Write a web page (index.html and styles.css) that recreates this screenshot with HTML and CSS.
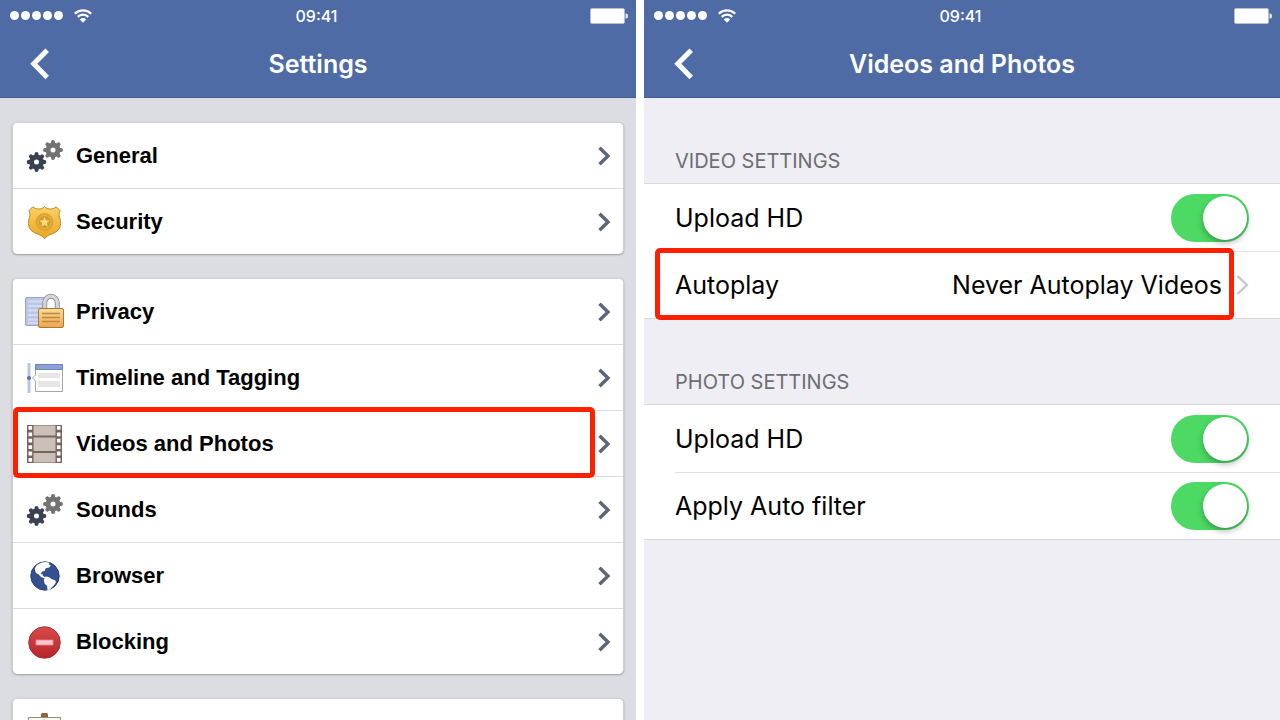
FILE: index.html
```html
<!DOCTYPE html>
<html lang="en">
<head>
	<meta charset="utf-8">
	<meta name="viewport" content="width=device-width, initial-scale=1">
	<title>Settings</title>
	<link rel="stylesheet" href="styles.css">
</head>
<body>
	<svg class="sprite" aria-hidden="true">
		<defs>
			<linearGradient id="gold" x1="0" y1="0" x2="0" y2="1">
				<stop offset="0" stop-color="#fbd263"/>
				<stop offset="1" stop-color="#eaa51f"/>
			</linearGradient>
			<linearGradient id="lock" x1="0" y1="0" x2="0" y2="1">
				<stop offset="0" stop-color="#fbdc9c"/>
				<stop offset="1" stop-color="#eda64a"/>
			</linearGradient>
			<linearGradient id="red" x1="0" y1="0" x2="0" y2="1">
				<stop offset="0" stop-color="#d94a4c"/>
				<stop offset="1" stop-color="#b5262b"/>
			</linearGradient>
		</defs>
		<symbol id="gear" viewBox="-10 -10 20 20">
			<g fill="none" stroke="currentColor">
				<circle r="5" stroke-width="5"/>
				<path stroke-width="4" stroke-linecap="round" d="M0-8V-6M0 8V6M-8 0H-6M8 0H6M-5.600-5.600l1.500 1.500M5.600 5.600L4.100 4.100M-5.600 5.600l1.500-1.500M5.600-5.600L4.100-4.100"/>
			</g>
		</symbol>
		<symbol id="gears" viewBox="0 0 40 40">
			<use href="#gear" x="19" y="4" width="20" height="20" color="#737373"/>
			<use href="#gear" x="2.500" y="16" width="20" height="20" color="#3a4152"/>
		</symbol>
		<symbol id="wifi" viewBox="0 0 18 14">
			<g fill="none" stroke="#fff" stroke-width="2.200">
				<path d="M.8 4.800a11.600 11.600 0 0 1 16.400 0"/>
				<path d="M3.700 7.900a7.500 7.500 0 0 1 10.600 0"/>
			</g>
			<path fill="#fff" d="M5.800 10.400a4.600 4.600 0 0 1 6.400 0L9 13.800z"/>
		</symbol>
		<symbol id="battery" viewBox="0 0 38 16">
			<rect x=".5" y=".5" width="34" height="15" rx="1.500" fill="#fff" stroke="#b4c1c9"/>
			<path fill="#e4e9ef" d="M35.500 5.500h1q1.500 0 1.500 2.500t-1.500 2.500h-1z"/>
		</symbol>
		<symbol id="back" viewBox="0 0 20 32">
			<path fill="none" stroke="#fff" stroke-width="5" d="M17.200 2.200L3.800 15.800l13.400 13.600"/>
		</symbol>
		<symbol id="chevron" viewBox="0 0 13 20">
			<path fill="none" stroke="currentColor" stroke-width="3.400" d="M1.500 1.700L10 10l-8.500 8.300"/>
		</symbol>
		<symbol id="chevron-thin" viewBox="0 0 13 20">
			<path fill="none" stroke="currentColor" stroke-width="2.400" d="M1.500 1L10.800 10l-9.300 9"/>
		</symbol>
	</svg>

	<div class="screens">
		<section class="screen screen-settings">
			<header class="top">
				<div class="status">
					<div class="signal">
						<i class="dot"></i><i class="dot"></i><i class="dot"></i><i class="dot"></i><i class="dot"></i>
						<svg class="wifi"><use href="#wifi"/></svg>
					</div>
					<span class="time">09:41</span>
					<svg class="battery"><use href="#battery"/></svg>
				</div>
				<div class="nav">
					<button class="back" type="button" aria-label="Back"><svg><use href="#back"/></svg></button>
					<h1>Settings</h1>
				</div>
			</header>
			<nav class="cards">
				<ul class="card">
					<li><a href="#general">
						<svg class="icon"><use href="#gears"/></svg>
						<span class="name">General</span>
						<svg class="chevron"><use href="#chevron"/></svg>
					</a></li>
					<li><a href="#security">
						<svg class="icon" viewBox="0 0 40 40">
							<path fill="url(#gold)" stroke="#b98a35" d="M20.500 4.500c1.500 1.800 3.500 2.500 6 2.500 2.300 0 4.200-.7 5.700-2.200l4 4c-1.200 2-1.500 4-.7 6.500.8 2.600 1 3.700 1 6.200 0 5.500-3.500 8.500-8.500 10.300-3.500 1.300-5.500 2.500-7.500 4.900-2-2.400-4-3.600-7.500-4.900-5-1.800-8.500-4.800-8.500-10.300 0-2.500.2-3.600 1-6.200.8-2.500.5-4.500-.7-6.500l4-4C10.300 6.300 12.200 7 14.500 7c2.500 0 4.500-.7 6-2.500z"/>
							<circle cx="20.500" cy="20" r="9" fill="#dda32d"/>
							<circle cx="20.500" cy="20" r="6.500" fill="#d0992f" stroke="#e7b64f"/>
							<path fill="#ffdc73" d="M20.500 14.800l1.500 3.500 3.700.3-2.800 2.500.9 3.700-3.300-2-3.300 2 .9-3.700-2.800-2.500 3.700-.3z"/>
						</svg>
						<span class="name">Security</span>
						<svg class="chevron"><use href="#chevron"/></svg>
					</a></li>
				</ul>
				<ul class="card">
					<li><a href="#privacy">
						<svg class="icon" viewBox="0 0 40 40">
							<rect x="1.500" y="5.500" width="20" height="28" rx="1.500" fill="#b9c6e6" stroke="#94a5d2"/>
							<path stroke="#d3dcf1" stroke-width="2" d="M4 9.500h16M4 14h16M4 18.500h16M4 23h16M4 27.500h16M4 31h16"/>
							<path fill="none" stroke="#8f8f92" stroke-width="5" d="M20.700 17v-6a6.300 6.800 0 0 1 12.600 0v6"/>
							<path fill="none" stroke="#d6d6d8" stroke-width="3.200" d="M20.700 17v-6a6.300 6.800 0 0 1 12.600 0v6"/>
							<rect x="14.500" y="16.500" width="25" height="19" rx="1.500" fill="url(#lock)" stroke="#a8763a"/>
							<path stroke="#bf873f" stroke-width="1.300" d="M18 21.500h18M18 25.500h18M18 29.500h18"/>
						</svg>
						<span class="name">Privacy</span>
						<svg class="chevron"><use href="#chevron"/></svg>
					</a></li>
					<li><a href="#timeline">
						<svg class="icon" viewBox="0 0 40 40">
							<path fill="#b8c5e4" d="M3.500 5h3v30h-3z"/>
							<circle cx="5" cy="20" r="2" fill="#5470ad"/>
							<path fill="#fff" stroke="#a6a6a6" d="M11.500 6.500h27v27h-27V23l-3-3 3-3z"/>
							<path fill="#8aa0d6" stroke="#6d84bd" d="M11.500 6.500h27v5h-27z"/>
							<path fill="#e6e6e6" d="M14 15h22v5H14zM14 23h22v6H14z"/>
						</svg>
						<span class="name">Timeline and Tagging</span>
						<svg class="chevron"><use href="#chevron"/></svg>
					</a></li>
					<li class="highlight"><a href="#videos">
						<svg class="icon" viewBox="0 0 40 40">
							<path fill="#75655f" d="M3 1h35v38H3z"/>
							<path fill="#cbbfb7" d="M9.500 1.500h22v10h-22zM9.500 13.500h22V27h-22zM9.500 29h22v9.500h-22z"/>
							<path fill="none" stroke="#fff" stroke-width="3.600" stroke-dasharray="3.800 2.600" d="M6.300 2v36M34.700 2v36"/>
						</svg>
						<span class="name">Videos and Photos</span>
						<svg class="chevron"><use href="#chevron"/></svg>
					</a></li>
					<li><a href="#sounds">
						<svg class="icon"><use href="#gears"/></svg>
						<span class="name">Sounds</span>
						<svg class="chevron"><use href="#chevron"/></svg>
					</a></li>
					<li><a href="#browser">
						<svg class="icon" viewBox="0 0 40 40">
							<circle cx="21" cy="20" r="14.200" fill="#35508f" stroke="#27407a"/>
							<path fill="#fff" d="M12.500 9.500c2.500-2.300 5.500-3.500 9.500-3.500l3.500.8-.6 1.700 1.800.8-1.500 2.200-3.400.8-1.300 2.700-2.700.8-.8 2.200 1.800.4.200 1.700 2.300 1.200-.9 1.200-3.300-1.500-2.700-2.800-2.600-1.500-1-3.500c.3-1.500.8-2.700 1.700-3.700z"/>
							<path fill="#fff" d="M21.300 20.600l3.600.4 2.500 1.900 3.600 1.300 1 1.900-1.700 3-2.200 1.800-2 2.600-2.600.8-.4-4.300-2.300-2.200-1-3.600z"/>
						</svg>
						<span class="name">Browser</span>
						<svg class="chevron"><use href="#chevron"/></svg>
					</a></li>
					<li><a href="#blocking">
						<svg class="icon" viewBox="0 0 40 40">
							<circle cx="20.500" cy="20.500" r="15.800" fill="url(#red)" stroke="#9d3636"/>
							<path fill="#f8c5cb" stroke="#e58d92" stroke-width=".8" d="M12 18h17v5H12z"/>
						</svg>
						<span class="name">Blocking</span>
						<svg class="chevron"><use href="#chevron"/></svg>
					</a></li>
				</ul>
				<ul class="card">
					<li><a href="#activity" aria-label="Activity">
						<svg class="icon" viewBox="0 0 40 40">
							<path fill="#fbfaf0" stroke="#8c8c86" d="M4.500 5.500h32v30h-32z"/>
							<path fill="#8a6536" d="M17 5V2.500Q17 1 18.500 1h4Q24 1 24 2.500V5z"/>
							<path fill="#a9a9a4" d="M18 9l2-2 2 2z"/>
						</svg>
					</a></li>
				</ul>
			</nav>
		</section>

		<section class="screen screen-videos">
			<header class="top">
				<div class="status">
					<div class="signal">
						<i class="dot"></i><i class="dot"></i><i class="dot"></i><i class="dot"></i><i class="dot"></i>
						<svg class="wifi"><use href="#wifi"/></svg>
					</div>
					<span class="time">09:41</span>
					<svg class="battery"><use href="#battery"/></svg>
				</div>
				<div class="nav">
					<button class="back" type="button" aria-label="Back"><svg><use href="#back"/></svg></button>
					<h1>Videos and Photos</h1>
				</div>
			</header>
			<main>
				<h2>VIDEO SETTINGS</h2>
				<ul class="options">
					<li>
						<label for="video-hd">Upload HD</label>
						<input class="switch" id="video-hd" type="checkbox" role="switch" checked>
					</li>
					<li class="highlight">
						<a href="#autoplay">
							<span class="name">Autoplay</span>
							<span class="value">Never Autoplay Videos</span>
							<svg class="chevron"><use href="#chevron-thin"/></svg>
						</a>
					</li>
				</ul>
				<h2>PHOTO SETTINGS</h2>
				<ul class="options">
					<li>
						<label for="photo-hd">Upload HD</label>
						<input class="switch" id="photo-hd" type="checkbox" role="switch" checked>
					</li>
					<li>
						<label for="auto-filter">Apply Auto filter</label>
						<input class="switch" id="auto-filter" type="checkbox" role="switch" checked>
					</li>
				</ul>
			</main>
		</section>
	</div>
</body>
</html>
```
FILE: styles.css
```css
* {
	box-sizing: border-box;
}
body {
	margin: 0;
	background-color: #fff;
	font-family: Inter, "Liberation Sans", sans-serif;
	color: #000;
}
ul {
	list-style: none;
	margin: 0;
	padding: 0;
}
a {
	color: inherit;
	text-decoration: none;
}
.sprite {
	display: block;
	width: 0;
	height: 0;
}
.screens {
	display: grid;
	grid-template-columns: 1fr 1fr;
	gap: 8px;
	height: 100vh;
	overflow: hidden;
}
.screen-settings {
	background-color: #dcdde2;
}
.screen-videos {
	background-color: #efeef5;
}

/* blue bar */
.top {
	background-color: #4e6ba5;
	border-bottom: 1px solid #3f5c97;
	color: #fff;
}
.status, .nav {
	display: grid;
	grid-template-columns: 1fr auto 1fr;
	align-items: center;
}
.status {
	height: 31px;
	padding: 0 8px 0 10px;
}
.signal {
	display: flex;
	align-items: center;
	gap: 2px;
}
.dot {
	width: 9px;
	height: 9px;
	border-radius: 50%;
	background-color: #fff;
}
.wifi {
	width: 18px;
	height: 14px;
	margin-left: 9px;
}
.time {
	margin-right: 5px;
	font-size: 16px;
	font-weight: 500;
	line-height: 20px;
}
.battery {
	width: 38px;
	height: 16px;
	justify-self: end;
}
.nav {
	height: 66px;
	padding: 0 30px;
}
.back {
	width: 20px;
	height: 32px;
	padding: 0;
	border: 0;
	background: none;
	cursor: pointer;
}
.back svg {
	display: block;
	width: 20px;
	height: 32px;
}
h1 {
	margin: 0;
	font-size: 25px;
	font-weight: 600;
	line-height: 32px;
}

/* settings list */
.cards {
	display: flex;
	flex-direction: column;
	gap: 24px;
	padding: 24px 12px;
}
.card {
	background-color: #fff;
	border: 1px solid #cfd0d5;
	border-bottom: 0;
	border-radius: 5px;
	box-shadow: 0 1px 2px rgba(0,0,0,0.3);
}
.card li + li {
	border-top: 1px solid #dcdce0;
}
.card a {
	display: flex;
	align-items: center;
	height: 65px;
	padding: 0 12px 0 11px;
	font-family: "Liberation Sans", Arial, sans-serif;
	font-size: 22px;
	font-weight: 700;
	line-height: 28px;
}
.icon {
	width: 40px;
	height: 40px;
	margin-right: 12px;
}
.name {
	flex: 1;
}
.chevron {
	width: 13px;
	height: 20px;
	color: #5d657a;
}

/* video and photo options */
h2 {
	margin: 0;
	padding: 51px 31px 10px;
	font-size: 20px;
	font-weight: 400;
	line-height: 24px;
	color: #6d6d72;
}
.options {
	background-color: #fff;
	border: solid #d8d8dc;
	border-width: 1px 0;
	padding-left: 31px;
}
.options li {
	display: flex;
	align-items: center;
	justify-content: space-between;
	height: 67px;
	padding-right: 31px;
	font-size: 25px;
	line-height: 32px;
}
.options li + li {
	border-top: 1px solid #e0e0e3;
}
.options a {
	flex: 1;
	display: flex;
	align-items: center;
}
.options .value {
	margin-right: 14px;
}
.options .chevron {
	color: #c7c7cc;
}
.switch {
	appearance: none;
	display: flex;
	justify-content: flex-end;
	width: 78px;
	height: 48px;
	margin: 0;
	padding: 2px;
	border-radius: 24px;
	background-color: #d8d8dc;
	cursor: pointer;
}
.switch::before {
	content: "";
	width: 44px;
	height: 44px;
	border-radius: 50%;
	background-color: #fff;
	box-shadow: 0 3px 6px rgba(0,0,0,0.3);
}
.switch:checked {
	background-color: #4cd964;
}
.switch:not(:checked) {
	justify-content: flex-start;
}

/* red frame over a row */
.highlight {
	position: relative;
}
.highlight::after {
	content: "";
	position: absolute;
	z-index: 1;
	top: -4px;
	right: 28px;
	bottom: -2px;
	left: 0;
	border: 5px solid #ff2000;
	border-radius: 5px;
	pointer-events: none;
}
.options .highlight::after {
	right: 46px;
	left: -20px;
}
```
